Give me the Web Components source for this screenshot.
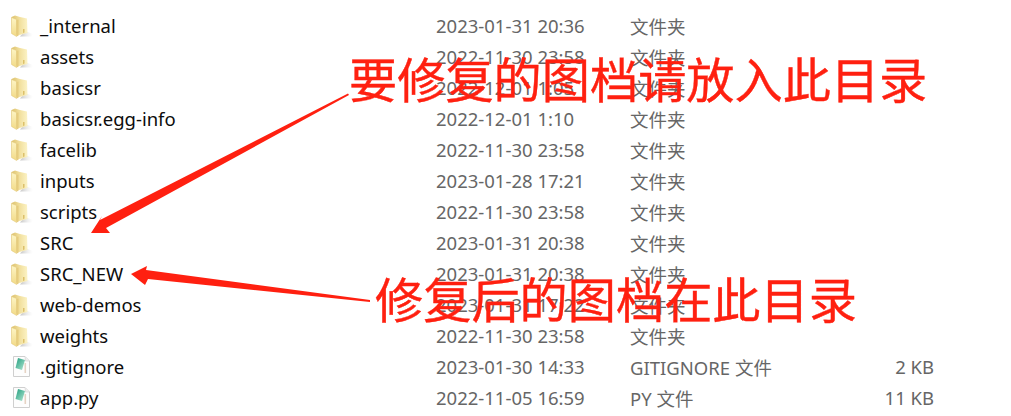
<!DOCTYPE html>
<html>
<head>
<meta charset="utf-8">
<style>
  html, body { margin: 0; background: #fff; }
  body { width: 1011px; height: 416px; overflow: hidden; position: relative; }
</style>
</head>
<body>
<file-list>
  <file-row name="_internal" date="2023-01-31 20:36" type="文件夹"></file-row>
  <file-row name="assets" date="2022-11-30 23:58" type="文件夹"></file-row>
  <file-row name="basicsr" date="2022-12-01 1:05" type="文件夹"></file-row>
  <file-row name="basicsr.egg-info" date="2022-12-01 1:10" type="文件夹"></file-row>
  <file-row name="facelib" date="2022-11-30 23:58" type="文件夹"></file-row>
  <file-row name="inputs" date="2023-01-28 17:21" type="文件夹"></file-row>
  <file-row name="scripts" date="2022-11-30 23:58" type="文件夹"></file-row>
  <file-row name="SRC" date="2023-01-31 20:38" type="文件夹"></file-row>
  <file-row name="SRC_NEW" date="2023-01-31 20:38" type="文件夹"></file-row>
  <file-row name="web-demos" date="2023-01-31 17:22" type="文件夹"></file-row>
  <file-row name="weights" date="2022-11-30 23:58" type="文件夹"></file-row>
  <file-row kind="file" name=".gitignore" date="2023-01-30 14:33" type="GITIGNORE 文件" size="2 KB"></file-row>
  <file-row kind="file" name="app.py" date="2022-11-05 16:59" type="PY 文件" size="11 KB"></file-row>
</file-list>
<red-arrows></red-arrows>
<call-out style="left:349px;top:45px">要修复的图档请放入此目录</call-out>
<call-out style="left:375px;top:265px">修复后的图档在此目录</call-out>

<script>
const folderSvg = `<svg width="24" height="24" viewBox="0 0 24 24">
  <defs>
    <linearGradient id="back" x1="0" y1="0" x2="1" y2="0">
      <stop offset="0" stop-color="#dcc06c"/><stop offset=".45" stop-color="#f0dd98"/><stop offset="1" stop-color="#fcf3c6"/>
    </linearGradient>
    <linearGradient id="front" x1="0" y1="0" x2="0" y2="1">
      <stop offset="0" stop-color="#fdf5c6"/><stop offset="1" stop-color="#f2da86"/>
    </linearGradient>
    <linearGradient id="shade" x1="0" y1="0" x2="1" y2="0">
      <stop offset="0" stop-color="#aaa" stop-opacity=".7"/><stop offset="1" stop-color="#ddd" stop-opacity="0"/>
    </linearGradient>
  </defs>
  <path d="M15 17 L23 20 L22 22.5 L10 22.5 Z" fill="url(#shade)"/>
  <path d="M1.5 3 L5 1.5 L10 3 L17 4.5 L17.5 19 L9 21 L2 20 Z" fill="url(#back)"/>
  <path d="M1.5 3.5 L6.5 5.5 L6.5 22.5 L1.5 19.5 Z" fill="url(#front)" stroke="#e0c678" stroke-width=".5"/>
  <path d="M6.5 6 L8.5 5.5 L8.5 21.7 L6.5 22.5 Z" fill="#e6cc7e"/>
  <path d="M13 15 L14.5 15 L14.5 18.5 L13 19 Z" fill="#dcc06a"/>
</svg>`;

const fileSvg = `<svg width="20" height="23" viewBox="0 0 20 23">
  <defs>
    <linearGradient id="py" x1="0" y1="0" x2="1" y2="1">
      <stop offset="0" stop-color="#1f9c7c"/><stop offset="1" stop-color="#b4e8d4"/>
    </linearGradient>
  </defs>
  <path d="M1.5 1.5 H13 L17.5 6 V21.5 H1.5 Z" fill="#fdfdfd" stroke="#cfcfcf"/>
  <path d="M13 1.5 L13.5 6 L17.5 6" fill="#eeeeee" stroke="#d4d4d4" stroke-width=".7"/>
  <path d="M6 3 L13 5 L10 15 L3.5 13 Z" fill="url(#py)"/>
  <rect x="12.5" y="8" width="1.6" height="10" fill="#e6d3c4"/>
</svg>`;

class FileList extends HTMLElement {
  constructor() {
    super();
    this.attachShadow({mode: 'open'});
    this.shadowRoot.innerHTML = `
      <style>
        :host { display: block; padding-top: 10px; }
      </style>
      <slot></slot>`;
  }
}

class FileRow extends HTMLElement {
  constructor() {
    super();
    this.attachShadow({mode: 'open'});
  }

  connectedCallback() {
    const isFile = this.getAttribute('kind') == 'file';
    this.shadowRoot.innerHTML = `
      <style>
        :host {
          display: grid;
          grid-template-columns: 436px 194px 304px;
          grid-template-rows: 31px;
          height: 31px;
          align-items: center;
          white-space: nowrap;
          font: 18.5px "Noto Sans", "Noto Sans CJK SC", sans-serif;
          color: #666;
        }
        .name { display: grid; grid-template-columns: 24px auto; justify-content: start; align-items: center; column-gap: 6px; padding-left: 10px; color: #0c0c0c; }
        .icon { display: flex; }
        .file { padding-left: 2px; }
        .type { display: flex; justify-content: space-between; }
      </style>
      <div class="name"><span class="icon ${isFile ? 'file' : ''}">${isFile ? fileSvg : folderSvg}</span><span>${this.getAttribute('name')}</span></div>
      <div class="date">${this.getAttribute('date')}</div>
      <div class="type"><span>${this.getAttribute('type')}</span><span>${this.getAttribute('size') || ''}</span></div>`;
  }
}

class RedArrows extends HTMLElement {
  constructor() {
    super();
    this.attachShadow({mode: 'open'});
    this.shadowRoot.innerHTML = `
      <style>
        :host { position: absolute; left: 0; top: 0; width: 1011px; height: 416px; display: block; pointer-events: none; }
      </style>
      <svg width="1011" height="416" viewBox="0 0 1011 416">
        <polygon fill="#ff2010" points="348,93.5 349,95 106,228 110,233 91,233 102,216 100,220"/>
        <polygon fill="#ff2010" points="131,274 147,266 146,270 370,300 370,302 148,279 145,285"/>
      </svg>`;
  }
}

class CallOut extends HTMLElement {
  constructor() {
    super();
    this.attachShadow({mode: 'open'});
    this.shadowRoot.innerHTML = `
      <style>
        :host {
          position: absolute;
          display: block;
          white-space: nowrap;
          font: 48.2px/64px "Noto Sans CJK SC", sans-serif;
          color: #ff2010;
          -webkit-text-stroke: .4px #ff2010;
        }
      </style>
      <slot></slot>`;
  }
}

customElements.define('file-list', FileList);
customElements.define('file-row', FileRow);
customElements.define('red-arrows', RedArrows);
customElements.define('call-out', CallOut);
</script>
</body>
</html>
